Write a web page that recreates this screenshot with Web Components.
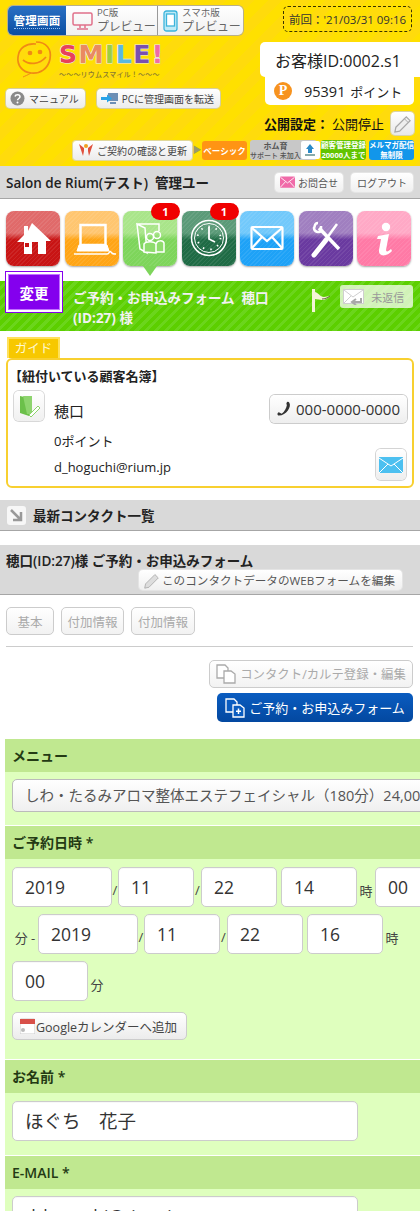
<!DOCTYPE html>
<html lang="ja">
<head>
<meta charset="utf-8">
<title>SMILE 管理画面</title>
<style>
  html, body { margin: 0; padding: 0; overflow: hidden; background: #fff; }
  body { width: 420px; height: 1211px; font-family: "Open Sans", "Noto Sans CJK JP", sans-serif; color: #222; }
</style>
</head>
<body>

<top-header></top-header>
<title-bar></title-bar>
<icon-menu>
  <menu-tile style="--hi:#e06a6a;--lo:#c81414">
    <svg viewBox="0 0 54 54"><path d="M26 12 L45 30 H40 V43 H32 V31 H26 V43 H18 V31 H11 L18 24 V15 H22 V20Z" fill="#fff"/><rect x="19" y="32" width="4" height="4" fill="#c81414"/></svg>
  </menu-tile>
  <menu-tile style="--hi:#ffc670;--lo:#ffa516">
    <svg viewBox="0 0 54 54" fill="none" stroke="#fff"><rect x="15.500" y="14" width="25" height="20" stroke-width="2.500"/><path d="M14 34 H42 L44 40 H12Z" fill="#fff" stroke-width="1"/><path d="M9 43 H42 C45 43 44 39 46 41 C47 43 48 43 51 43" stroke-width="1.500"/></svg>
  </menu-tile>
  <menu-tile style="--hi:#a9e58a;--lo:#7ed55b" badge="1" arrow>
    <svg viewBox="0 0 54 54" fill="none" stroke="#fff" stroke-width="1.500"><path d="M14 13 L22 17 L24 42 L17 38Z M14 13 H36 V20"/><circle cx="27" cy="26" r="3.500"/><circle cx="34" cy="24" r="3.500"/><path d="M21 41 V33 C23 30 31 30 33 33 V42Z M33 33 C34 29 40 29 41 32 V41 H33" fill="#8fdc6d"/></svg>
  </menu-tile>
  <menu-tile style="--hi:#5b9a78;--lo:#1f6b45" badge="1">
    <svg viewBox="0 0 54 54" fill="none" stroke="#fff"><circle cx="27" cy="27" r="17.500" stroke-width="1.500"/><circle cx="27" cy="27" r="14.500" stroke-width="1"/><path d="M27 16 V28 L33 31" stroke-width="1.800"/><g stroke-width="1.800" stroke-dasharray="1.500 6.100"><circle cx="27" cy="27" r="11.500"/></g></svg>
  </menu-tile>
  <menu-tile style="--hi:#72c9fb;--lo:#1ea2f7">
    <svg viewBox="0 0 54 54" fill="none" stroke="#fff" stroke-width="2.200"><rect x="11.500" y="16" width="31" height="22" rx="1"/><path d="M12 17 L27 30 L42 17 M12 37 L22 26 M42 37 L32 26"/></svg>
  </menu-tile>
  <menu-tile style="--hi:#a07fc0;--lo:#6a3aa0">
    <svg viewBox="0 0 54 54" fill="none" stroke="#fff"><path d="M20 17 L40 38" stroke-width="3.500"/><path d="M19 12 C15 12 16 16 15 17 C15 21 20 22 22 20 L22 15" stroke-width="2.500"/><path d="M38 13 L25 31" stroke-width="2.500"/><path d="M27 29 L15 44" stroke-width="5" stroke-linecap="round"/></svg>
  </menu-tile>
  <menu-tile style="--hi:#ffa9c6;--lo:#ff7aa6">
    <svg viewBox="0 0 54 54" fill="#fff"><circle cx="29" cy="16" r="4.200"/><path d="M21 25 L32 23 L29 39 C29 41 31 41 34 38 L35 40 C31 45 21 47 22 39 L24 28 L20 28Z"/></svg>
  </menu-tile>
</icon-menu>
<status-bar></status-bar>
<guide-card></guide-card>
<list-bar></list-bar>
<form-head></form-head>
<tab-row></tab-row>
<action-row></action-row>

<form-area>
  <form-section label="メニュー" pad="7px 0 13px">
    <select-box>しわ・たるみアロマ整体エステフェイシャル（180分）24,000円</select-box>
  </form-section>
  <form-section label="ご予約日時 *" pad="8px 0 19px">
    <date-flow>
      <field-box w="100">2019</field-box><small-text w="6">/</small-text>
      <field-box w="76">11</field-box><small-text w="7">/</small-text>
      <field-box w="76">22</field-box><small-text w="4"></small-text>
      <field-box w="76">14</field-box><small-text w="18">時</small-text>
      <field-box w="76">00</field-box>
      <small-text w="26">分 -</small-text>
      <field-box w="100">2019</field-box><small-text w="6">/</small-text>
      <field-box w="76">11</field-box><small-text w="7">/</small-text>
      <field-box w="76">22</field-box><small-text w="4"></small-text>
      <field-box w="76">16</field-box><small-text w="18">時</small-text>
      <field-box w="76">00</field-box><small-text w="18">分</small-text>
    </date-flow>
    <cal-button>Googleカレンダーへ追加</cal-button>
  </form-section>
  <form-section label="お名前 *" pad="8px 0 14px">
    <field-box w="346" size="18.500">ほぐち　花子</field-box>
  </form-section>
  <form-section label="E-MAIL *" pad="7px 0 13px">
    <field-box w="346">d_hoguchi@rium.jp</field-box>
  </form-section>
</form-area>

<script>
  const PENCIL = `<svg viewBox="0 0 20 20" width="100%" height="100%" style="display:block"><path d="M3 14 L14 3 L18 7 L7 18 L2 19Z" fill="#eee" stroke="#a8a8a8" stroke-width="1.300"/><path d="M12 5 L16 9" stroke="#a8a8a8"/></svg>`;
  const MAIL_PINK = `<svg viewBox="0 0 16 12" width="15" height="12"><rect width="16" height="12" rx="1" fill="#f06aa8"/><path d="M.5 1 L8 7 L15.500 1 M.5 11.500 L6 5.500 M15.500 11.500 L10 5.500" fill="none" stroke="#fff" stroke-width=".9"/></svg>`;

  const headerTemplate = document.createElement('template');
  headerTemplate.innerHTML = `
  <style>
    :host { display: block; height: 166px; box-sizing: border-box; overflow: hidden;
      background: repeating-linear-gradient(135deg, #ffe000 0 10px, #ffdb0c 10px 20px); }
    * { box-sizing: border-box; }
    .main { display: grid; grid-template-columns: 260px 160px; height: 140px; }
    .left, .right { display: flex; flex-direction: column; align-items: flex-start; }
    .seg { display: flex; width: 235px; height: 29px; margin: 6px 0 0 8px; background: linear-gradient(#fff, #f0f0f0);
      border-radius: 5px; box-shadow: 0 0 0 1px #b9b08a; overflow: hidden; }
    .seg .admin { width: 58px; background: linear-gradient(#2a70c4, #0b4ea2); color: #fff; font-size: 11.500px; font-weight: 700;
      display: flex; align-items: center; justify-content: center; letter-spacing: .2px; white-space: nowrap; }
    .seg .admin span { border-bottom: 1px dotted #9cc2ee; line-height: 15px; }
    .prev { display: flex; align-items: center; gap: 4px; color: #666; }
    .prev.pc { width: 92px; padding-left: 6px; border-right: 1px solid #999; }
    .prev.sp { width: 85px; padding-left: 5px; }
    .prev div { display: flex; flex-direction: column; font-size: 9.500px; line-height: 12px; white-space: nowrap; }
    .prev b { font-weight: 400; font-size: 12px; line-height: 15px; letter-spacing: -.3px; }
    .logo { display: flex; margin: 5px 0 0 15px; height: 43px; gap: 4px; }
    .words { display: flex; flex-direction: column; }
    .smile { font-family: "DejaVu Sans", sans-serif; font-weight: 700; font-size: 25px; line-height: 27px; letter-spacing: 1.500px; margin-top: 1px; white-space: nowrap; }
    .smile i { font-style: normal; -webkit-text-stroke: 1.200px #e8e8f0; paint-order: stroke; }
    .tag { font-size: 7px; line-height: 10px; color: #8a7a30; font-weight: 500; margin-top: 2px; white-space: nowrap; letter-spacing: .2px; }
    .btns { display: flex; gap: 12px; margin: 6px 0 0 6px; }
    .btn { display: flex; align-items: center; gap: 4px; height: 19px; padding: 0 6px 0 4px; background: linear-gradient(#fff, #ececec); border-radius: 4px;
      box-shadow: 0 0 0 1px #d6cf9e; font-size: 10px; color: #444; white-space: nowrap; }
    .last { width: 129px; height: 26px; margin: 6px 0 0 23px; border: 1px dashed #3a3200; border-radius: 5px; font-size: 11.500px; color: #333;
      display: flex; align-items: center; justify-content: center; white-space: nowrap; }
    .id { width: 160px; height: 35px; margin-top: 10px; background: #fff; border-radius: 5px 0 0 5px; font-size: 16px; color: #222;
      display: flex; align-items: center; padding-left: 15px; white-space: nowrap; }
    .pt { width: 149px; height: 28px; margin-left: 5px; background: #fff; border-radius: 0 0 5px 5px; display: flex; align-items: center; gap: 12px; padding-left: 9px;
      font-size: 14.500px; white-space: nowrap; }
    .coin { width: 18px; height: 18px; border-radius: 50%; background: #f7931e; color: #fff; font: 700 14px "Liberation Serif", serif; display: flex; align-items: center; justify-content: center; flex: none; }
    .pt small { font-size: 13px; margin-left: 1px; }
    .pub { display: flex; align-items: center; height: 23px; margin: 7px 0 0 4px; font-size: 13px; color: #111; white-space: nowrap; width: 150px; }
    .pub b { font-weight: 700; margin-right: 3px; }
    .pen { width: 23px; height: 23px; margin-left: auto; background: linear-gradient(#fff, #e8e8e8); border-radius: 4px; padding: 2px; box-shadow: 0 0 0 1px #d8d2a8; }
    .plan { display: flex; align-items: center; justify-content: flex-end; padding-right: 6px; height: 20px; }
    .renew { display: flex; align-items: center; gap: 3px; width: 119px; height: 19px; padding-left: 5px; background: linear-gradient(#fff, #ececec); border-radius: 3px; box-shadow: 0 0 0 1px #e0d89a; font-size: 10px; color: #444; white-space: nowrap; }
    .tri { width: 10px; color: #9a9a6a; font-size: 9px; text-align: center; line-height: 20px; }
    .basic { width: 45px; height: 19px; background: #ff9414; color: #fff; font-size: 8.500px; font-weight: 700; border-radius: 3px; display: flex; align-items: center; justify-content: center; white-space: nowrap; }
    .home { width: 67px; height: 20px; margin-left: 3px; background: #c8c8c8; border-radius: 3px; display: flex; align-items: center; color: #555; }
    .home div { flex: 1; text-align: center; font-size: 7px; line-height: 9px; white-space: nowrap; font-weight: 500; }
    .home div b { display: block; font-size: 8px; font-weight: 700; line-height: 10px; }
    .up { flex: none !important; width: 19px; height: 18px; margin-right: 1px; background: #fff; border-radius: 2px; display: flex; align-items: center; justify-content: center; }
    .chip { width: 45px; height: 20px; margin-left: 4px; border-radius: 3px; color: #fff; font-size: 7.500px; font-weight: 700; line-height: 9.500px; text-align: center; padding-top: 1px; white-space: nowrap; }
    .chip.g { background: #62c400; }
    .chip.b { background: #1296ea; margin-left: 3px; }
  </style>
  <div class="main">
    <div class="left">
      <div class="seg">
        <div class="admin"><span>管理画面</span></div>
        <div class="prev pc">
          <svg width="21" height="20" viewBox="0 0 21 20" fill="none" stroke="#e0708a" stroke-width="1.500"><rect x="1" y="2" width="19" height="12" rx="1.500"/><path d="M8 14 V17 M13 14 V17 M5 18 H16"/></svg>
          <div>PC版<b>プレビュー</b></div>
        </div>
        <div class="prev sp">
          <svg width="15" height="22" viewBox="0 0 15 22" fill="#bfeaf6" stroke="#3cb4dc" stroke-width="1.300"><rect x="1" y="1" width="13" height="20" rx="2.500"/><rect x="3.500" y="4" width="8" height="12" fill="#fff"/></svg>
          <div>スマホ版<b>プレビュー</b></div>
        </div>
      </div>
      <div class="logo">
        <svg width="40" height="40" viewBox="0 0 40 40" fill="none" stroke="#f08a14" stroke-width="1.700"><path d="M21 2 C31 2 37 9 35 19 C33 29 25 34 16 33 C7 32 2 25 3 17 C4 8 11 3 21 4"/><circle cx="15" cy="13" r="1.500" fill="#f08a14"/><circle cx="25" cy="12" r="1.500" fill="#f08a14"/><path d="M8 20 C14 25 24 25 31 17"/><path d="M16 33 C13 35 10 36 8 37" stroke-width="1"/></svg>
        <div class="words">
          <div class="smile"><i style="color:#e8405a">S</i><i style="color:#ea8a60">M</i><i style="color:#9ccf40">I</i><i style="color:#5ab8e0">L</i><i style="color:#7a4fb0">E</i><i style="color:#f06aa8">!</i></div>
          <div class="tag">〜〜〜リウムスマイル！〜〜〜</div>
        </div>
      </div>
      <div class="btns">
        <div class="btn"><svg width="15" height="15" viewBox="0 0 15 15"><circle cx="7.500" cy="7.500" r="7" fill="#8a8a8a"/><path d="M5 5.500 C5.500 3 10 3 10 5.800 C10 7.500 7.500 7.500 7.500 9.300" fill="none" stroke="#fff" stroke-width="1.500"/><circle cx="7.500" cy="11.500" r="1" fill="#fff"/></svg>マニュアル</div>
        <div class="btn"><svg width="17" height="14" viewBox="0 0 17 14"><rect x="7" y="1" width="10" height="8" fill="#6d8fb5"/><rect x="9" y="10" width="6" height="2" fill="#6d8fb5"/><path d="M0 5 H6 V2.500 L11 6.500 L6 10.500 V8 H0Z" fill="#29a3e8"/></svg>PCに管理画面を転送</div>
      </div>
    </div>
    <div class="right">
      <div class="last">前回：'21/03/31 09:16</div>
      <div class="id">お客様ID:0002.s1</div>
      <div class="pt"><span class="coin">P</span><span>95391 <small>ポイント</small></span></div>
      <div class="pub"><b>公開設定：</b>公開停止<span class="pen">${PENCIL}</span></div>
    </div>
  </div>
  <div class="plan">
    <div class="renew"><svg width="16" height="14" viewBox="0 0 16 14" fill="#e0503c"><path d="M1 1 L6 5 V8 L5 13 L3 7Z M15 1 L10 5 V8 L11 13 L13 7Z"/><circle cx="8" cy="3" r="2" fill="#f0a020"/></svg>ご契約の確認と更新</div>
    <div class="tri">▶</div>
    <div class="basic">ベーシック</div>
    <div class="home">
      <div><b>ホム育</b>サポート 未加入</div>
      <div class="up"><svg width="14" height="14" viewBox="0 0 14 14"><path d="M7 1 L11 6 H9 V10 H5 V6 H3Z" fill="#2a8ac8"/><rect x="2" y="11" width="10" height="2" fill="#8aa"/></svg></div>
    </div>
    <div class="chip g">顧客管理登録<br>20000人まで</div>
    <div class="chip b">メルマガ配信<br>無制限</div>
  </div>`;

  class TopHeader extends HTMLElement {
    constructor() {
      super();
      this.attachShadow({mode: 'open'});
      this.shadowRoot.appendChild(headerTemplate.content.cloneNode(true));
    }
  }
  customElements.define('top-header', TopHeader);

  // grey bars share the same look
  const GREY = `:host { display: block; background: #d9d9d9; border-bottom: 1px solid #a6a6a6; box-sizing: border-box; }`;
  const PLAIN_BTN = `background: linear-gradient(#fff, #f0f0f0); border-radius: 4px; box-shadow: 0 0 0 1px #e4e4e4; color: #555; white-space: nowrap;`;

  class SimpleElement extends HTMLElement {
    constructor() {
      super();
      this.attachShadow({mode: 'open'});
    }
    connectedCallback() {
      this.shadowRoot.innerHTML = this.markup();
    }
  }

  customElements.define('title-bar', class extends SimpleElement {
    markup() { return `
      <style>${GREY}
        :host { height: 33px; display: flex; align-items: center; padding: 0 7px 0 6px; }
        h1 { font-size: 13.500px; font-weight: 600; margin: 0; flex: 1; color: #222; white-space: nowrap; }
        a { display: flex; align-items: center; justify-content: center; gap: 3px; height: 19px; font-size: 10px; ${PLAIN_BTN} }
      </style>
      <h1>Salon de Rium(テスト)&nbsp; 管理ユー</h1>
      <a style="width:68px;margin-right:8px">${MAIL_PINK}お問合せ</a>
      <a style="width:62px">ログアウト</a>`; }
  });

  customElements.define('icon-menu', class extends SimpleElement {
    markup() { return `
      <style>:host { display: flex; justify-content: space-between; padding: 12px 9px 0 6px; height: 67px; box-sizing: border-box; }</style>
      <slot></slot>`; }
  });

  customElements.define('menu-tile', class extends SimpleElement {
    markup() {
      const badge = this.getAttribute('badge');
      return `
      <style>
        :host { display: block; position: relative; width: 54px; height: 55px; border-radius: 8px; box-shadow: 0 1px 2px rgba(0,0,0,.35);
          background:
            repeating-linear-gradient(135deg, rgba(255,255,255,.08) 0 1px, transparent 1px 3px),
            linear-gradient(var(--hi), var(--hi) 40%, var(--lo) 52%, var(--lo)); }
        ::slotted(svg) { display: block; width: 54px; height: 54px; }
        .badge { position: absolute; top: -8px; right: -3px; width: 29px; height: 17px; background: #f00000; color: #fff; border-radius: 9px;
          font-size: 11px; font-weight: 700; line-height: 17px; text-align: center; }
        .arrow { position: absolute; left: 20px; bottom: -10px; width: 14px; height: 10px; background: var(--lo); clip-path: polygon(0 0, 100% 0, 50% 100%); }
      </style>
      <slot></slot>
      ${badge ? `<div class="badge">${badge}</div>` : ''}
      ${this.hasAttribute('arrow') ? '<div class="arrow"></div>' : ''}`; }
  });

  customElements.define('status-bar', class extends SimpleElement {
    markup() { return `
      <style>
        :host { display: flex; position: relative; height: 50px; margin-top: 15px; padding: 7px 7px 0 73px; box-sizing: border-box;
          background: repeating-linear-gradient(135deg, #5ccf00 0 4px, #6bd51c 4px 7px); }
        .change { position: absolute; left: 6px; top: -9px; width: 56px; height: 40px; box-sizing: border-box; background: #8400ee; border: 2px solid #fff; outline: 1px solid #8400ee;
          color: #fff; font-size: 14.500px; font-weight: 700; display: flex; align-items: center; justify-content: center; box-shadow: inset 0 0 0 1px #c070ff; }
        .t { width: 239px; color: #f2f2f2; font-size: 13.500px; font-weight: 700; line-height: 20px; white-space: nowrap; }
        .flag { width: 20px; height: 24px; margin-right: 9px; flex: none; }
        .re { width: 73px; height: 23px; border-radius: 3px; background: rgba(255,255,255,.72); color: #9a9a9a; font-size: 11px; display: flex; align-items: center; gap: 6px; padding-left: 3px; box-sizing: border-box; margin-top: -3px; white-space: nowrap; }
      </style>
      <div class="change">変更</div>
      <div class="t">ご予約・お申込みフォーム&nbsp; 穂口<br>(ID:27) 様</div>
      <svg class="flag" viewBox="0 0 20 24"><rect x="1" y="1" width="3" height="23" fill="#f4f4d8"/><path d="M4 4 C8 5 9 9 13 9 C15 9 17 8 19 8 C16 10 15 12 11 12 C8 12 7 11 4 11Z" fill="#f4f4d8"/><path d="M11 11 C14 11 16 10 19 8" stroke="#6a6a40" fill="none"/></svg>
      <div class="re"><svg width="22" height="16" viewBox="0 0 22 16" fill="none" stroke="#cfcfcf"><rect x=".5" y=".5" width="20" height="14" fill="#fff"/><path d="M1 1 L10 8 L20 1 M1 14 L8 7"/><path d="M9 13 H18 V9 M13 10 L9 13 L13 16" stroke="#a8a8a8" stroke-width="2"/></svg>未返信</div>`; }
  });

  customElements.define('guide-card', class extends SimpleElement {
    markup() { return `
      <style>
        :host { display: block; padding: 6px 6px 0; }
        * { box-sizing: border-box; }
        .tag { width: 53px; height: 21px; margin-left: 1px; background: #f7c800; border: 2px solid #ffe15a; border-bottom: 0; color: #fff8d0; font-size: 12.500px; line-height: 20px; text-align: center; }
        .card { height: 130px; border: 2px solid #f8d030; border-radius: 6px; padding: 7px 6px 0; display: grid;
          grid-template-columns: 40px 1fr auto; grid-template-rows: 16px 48px 18px 36px; align-items: center; }
        h2 { grid-column: 1 / 4; font-size: 13px; font-weight: 600; margin: 0 0 0 -5px; color: #222; white-space: nowrap; }
        .folder { align-self: start; margin-top: 8px; width: 30px; height: 30px; background: linear-gradient(#fff, #f0f0f0); border-radius: 5px; box-shadow: 0 0 0 1px #d8d8d8; padding: 3px; }
        .name { font-size: 15px; color: #222; margin-top: 6px; }
        .tel { align-self: start; margin: 12px -1px 0 0; width: 137px; height: 28px; font-size: 15px; display: flex; align-items: center; justify-content: center; gap: 4px; color: #333; background: linear-gradient(#fff, #eee); border-radius: 5px; box-shadow: 0 0 0 1px #ccc; white-space: nowrap; }
        .line { grid-column: 2 / 3; font-size: 13px; color: #222; }
        .send { align-self: start; grid-column: 3; justify-self: end; width: 30px; height: 31px; background: linear-gradient(#fff, #eee); border-radius: 5px; box-shadow: 0 0 0 1px #d4d4d4; display: flex; align-items: center; justify-content: center; }
      </style>
      <div class="tag">ガイド</div>
      <div class="card">
        <h2>【紐付いている顧客名簿】</h2>
        <div class="folder"><svg viewBox="0 0 24 24" width="24" height="24"><path d="M3 2 L12 4 V22 L3 19Z" fill="#6cc04a"/><path d="M6 2 H15 V20 H10" fill="#8ed46e"/><path d="M12 21 L21 12 L23 14 L14 23Z" fill="#fff" stroke="#8ed46e"/></svg></div>
        <div class="name">穂口</div>
        <div class="tel"><svg width="15" height="16" viewBox="0 0 16 16"><path d="M13 1 C16 5 10 15 2 15 C0 15 0 12 2 11.500 L5 13 C8 11 10 7 10.500 4 L10 2 C11 0 12 0 13 1Z" fill="#333"/></svg>000-0000-0000</div>
        <div class="line">0ポイント</div><div></div>
        <div class="line">d_hoguchi@rium.jp</div>
        <div class="send"><svg width="24" height="16" viewBox="0 0 24 16"><rect width="24" height="16" fill="#4cc0f0"/><path d="M0 1 L12 9 L24 1 M0 16 L9 7 M24 16 L15 7" fill="none" stroke="#fff"/></svg></div>
      </div>`; }
  });

  customElements.define('list-bar', class extends SimpleElement {
    markup() { return `
      <style>${GREY}
        :host { height: 31px; margin-top: 12px; display: flex; align-items: center; padding-left: 7px; gap: 7px; }
        .ar { width: 19px; height: 19px; background: #f7f7f7; border-radius: 3px; }
        b { font-size: 13.500px; font-weight: 600; color: #222; }
      </style>
      <div class="ar"><svg viewBox="0 0 19 19"><path d="M4 4 L13 13 M14 6 V14 H6" fill="none" stroke="#999" stroke-width="2.500"/></svg></div>
      <b>最新コンタクト一覧</b>`; }
  });

  customElements.define('form-head', class extends SimpleElement {
    markup() { return `
      <style>${GREY}
        :host { height: 50px; margin-top: 14px; padding: 7px 0 0 6px; position: relative; }
        b { display: block; font-size: 13.500px; line-height: 18px; font-weight: 600; color: #222; white-space: nowrap; }
        a { display: flex; align-items: center; gap: 2px; width: 263px; height: 20px; margin: 0 0 0 133px; padding-left: 4px; box-sizing: border-box; font-size: 11.600px; ${PLAIN_BTN} }
      </style>
      <b>穂口(ID:27)様 ご予約・お申込みフォーム</b>
      <a><svg width="17" height="17" viewBox="0 0 20 20"><path d="M3 14 L14 3 L18 7 L7 18 L2 19Z" fill="#ddd" stroke="#aaa"/></svg>このコンタクトデータのWEBフォームを編集</a>`; }
  });

  customElements.define('tab-row', class extends SimpleElement {
    markup() { return `
      <style>
        :host { display: block; margin: 12px 7px 0 6px; height: 39px; border-bottom: 1px solid #ccc; }
        div { display: flex; gap: 7px; }
        a { height: 28px; display: flex; align-items: center; justify-content: center; font-size: 12.500px; color: #aaa; background: linear-gradient(#fff, #f2f2f2); border: 1px solid #ccc; border-radius: 5px; box-sizing: border-box; }
      </style>
      <div><a style="width:48px">基本</a><a style="width:63px">付加情報</a><a style="width:64px">付加情報</a></div>`; }
  });

  customElements.define('action-row', class extends SimpleElement {
    markup() { return `
      <style>
        :host { display: flex; flex-direction: column; align-items: flex-end; gap: 5px; padding: 13px 7px 0 0; }
        a { display: flex; align-items: center; justify-content: center; gap: 4px; height: 28px; box-sizing: border-box; font-size: 12.400px; border-radius: 5px; white-space: nowrap; }
        .off { width: 204px; background: linear-gradient(#fff, #f2f2f2); border: 1px solid #ccc; color: #aaa; }
        .on { width: 196px; height: 29px; background: linear-gradient(#0a5cc0, #0348a0); color: #fff; font-size: 13px; }
      </style>
      <a class="off"><svg width="20" height="20" viewBox="0 0 20 20" fill="#fff" stroke="#aaa" stroke-width="1.300"><path d="M1 1 H9 L12 4 V14 H1Z"/><path d="M8 7 H15 L19 10 V19 H8Z"/></svg>コンタクト/カルテ登録・編集</a>
      <a class="on"><svg width="20" height="20" viewBox="0 0 20 20" fill="none" stroke="#fff" stroke-width="1.300"><path d="M1 1 H9 L12 4 V14 H1Z" fill="#0a5cc0"/><path d="M8 7 H15 L19 10 V19 H8Z" fill="#0a5cc0"/><path d="M13.500 10.500 V16 M11 13.200 H16" stroke-width="1.500"/></svg>ご予約・お申込みフォーム</a>`; }
  });

  customElements.define('form-area', class extends SimpleElement {
    markup() { return `
      <style>:host { display: block; margin: 17px 0 0 5px; width: 460px; }</style>
      <slot></slot>`; }
  });

  customElements.define('form-section', class extends SimpleElement {
    markup() { return `
      <style>
        :host { display: block; background: #dfffbe; margin-bottom: 1px; }
        h3 { margin: 0; height: 33px; background: #c0e890; padding-left: 7px; font-size: 14px; font-weight: 600; line-height: 33px; color: #243a14; white-space: nowrap; }
        .in { padding: ${this.getAttribute('pad')}; margin-left: 7px; }
      </style>
      <h3>${this.getAttribute('label')}</h3>
      <div class="in"><slot></slot></div>`; }
  });

  customElements.define('select-box', class extends SimpleElement {
    markup() { return `
      <style>
        :host { display: block; height: 33px; width: 440px; box-sizing: border-box; padding-left: 12px; overflow: hidden;
          background: linear-gradient(#fff, #efefef); border: 1px solid #bbb; border-radius: 5px; color: #555; font-size: 14.500px; line-height: 31px; white-space: nowrap; }
      </style>
      <slot></slot>`; }
  });

  customElements.define('field-box', class extends SimpleElement {
    markup() { return `
      <style>
        :host { display: block; height: 40px; width: ${this.getAttribute('w')}px; box-sizing: border-box; padding-left: 12px; flex: none;
          background: #fff; border: 1px solid #ccc; border-radius: 5px; box-shadow: inset 0 1px 1px rgba(0,0,0,.03); color: #333; font-size: ${this.getAttribute('size') || '17.500'}px; line-height: 38px; white-space: nowrap; overflow: hidden; }
      </style>
      <slot></slot>`; }
  });

  customElements.define('small-text', class extends SimpleElement {
    markup() { return `
      <style>
        :host { display: block; width: ${this.getAttribute('w')}px; flex: none; padding-top: 6px; box-sizing: border-box; font-size: 13px; text-align: center; color: #444; white-space: nowrap; }
      </style>
      <slot></slot>`; }
  });

  customElements.define('date-flow', class extends SimpleElement {
    markup() { return `
      <style>:host { display: flex; flex-wrap: wrap; align-items: center; row-gap: 7px; width: 448px; }</style>
      <slot></slot>`; }
  });

  customElements.define('cal-button', class extends SimpleElement {
    markup() { return `
      <style>
        :host { display: flex; align-items: center; gap: 1px; width: 175px; height: 28px; margin-top: 11px; box-sizing: border-box; padding-left: 7px;
          background: linear-gradient(#fff, #ececec); border: 1px solid #ccc; border-radius: 5px; font-size: 12.500px; color: #444; white-space: nowrap; }
      </style>
      <svg width="15" height="16" viewBox="0 0 15 16"><rect y="1" width="15" height="15" rx="1" fill="#fff" stroke="#ccc"/><rect y="1" width="15" height="5" fill="#d8504a"/><circle cx="3" cy="12" r="2" fill="#bbb"/></svg>
      <slot></slot>`; }
  });
</script>
</body>
</html>
